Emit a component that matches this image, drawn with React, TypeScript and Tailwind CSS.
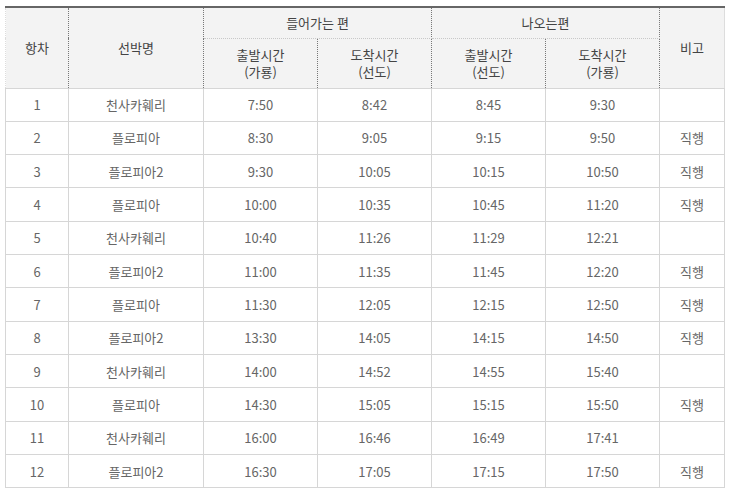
import React from "react";

type Row = [string, string, string, string, string, string, string];

const ROWS: Row[] = [
  ["1", "천사카훼리", "7:50", "8:42", "8:45", "9:30", ""],
  ["2", "플로피아", "8:30", "9:05", "9:15", "9:50", "직행"],
  ["3", "플로피아2", "9:30", "10:05", "10:15", "10:50", "직행"],
  ["4", "플로피아", "10:00", "10:35", "10:45", "11:20", "직행"],
  ["5", "천사카훼리", "10:40", "11:26", "11:29", "12:21", ""],
  ["6", "플로피아2", "11:00", "11:35", "11:45", "12:20", "직행"],
  ["7", "플로피아", "11:30", "12:05", "12:15", "12:50", "직행"],
  ["8", "플로피아2", "13:30", "14:05", "14:15", "14:50", "직행"],
  ["9", "천사카훼리", "14:00", "14:52", "14:55", "15:40", ""],
  ["10", "플로피아", "14:30", "15:05", "15:15", "15:50", "직행"],
  ["11", "천사카훼리", "16:00", "16:46", "16:49", "17:41", ""],
  ["12", "플로피아2", "16:30", "17:05", "17:15", "17:50", "직행"],
];

const FONT = "font-['Malgun_Gothic','Noto_Sans_CJK_KR',sans-serif]";

export default function App() {
  return (
    <div className={`w-[730px] h-[497px] bg-white pt-[6px] pl-[5px] ${FONT}`}>
      <table className="w-[719px] table-fixed border-collapse text-[13px] text-center">
        <colgroup>
          <col className="w-[63px]" />
          <col className="w-[135px]" />
          <col className="w-[114px]" />
          <col className="w-[114px]" />
          <col className="w-[114px]" />
          <col className="w-[114px]" />
          <col className="w-[65px]" />
        </colgroup>
        <thead className="bg-[#f3f3f3] text-[#444]">
          <tr className="border-t-2 border-t-[#666]">
            <th rowSpan={2} className="font-normal border-l border-l-[#ddd] border-r border-r-[#777] border-dotted border-b border-b-[#d6d6d6] border-b-solid">
              항차
            </th>
            <th rowSpan={2} className="font-normal border-r border-dotted border-r-[#777] border-b border-b-[#d6d6d6] border-b-solid">
              선박명
            </th>
            <th colSpan={2} className="h-[31px] font-normal border-r border-dotted border-r-[#777] border-b border-b-[#c8c8c8]">
              들어가는 편
            </th>
            <th colSpan={2} className="font-normal border-r border-dotted border-r-[#777] border-b border-b-[#c8c8c8]">
              나오는편
            </th>
            <th rowSpan={2} className="font-normal border-r border-r-[#ddd] border-b border-b-[#d6d6d6] border-b-solid">
              비고
            </th>
          </tr>
          <tr>
            {[
              ["출발시간", "(가룡)"],
              ["도착시간", "(선도)"],
              ["출발시간", "(선도)"],
              ["도착시간", "(가룡)"],
            ].map(([a, b], i) => (
              <th
                key={i}
                className="h-[50px] font-normal leading-[17px] border-r border-dotted border-r-[#777] border-b border-b-[#d6d6d6] border-b-solid"
              >
                {a}
                <br />
                {b}
              </th>
            ))}
          </tr>
        </thead>
        <tbody className="text-[#666]">
          {ROWS.map((r) => (
            <tr key={r[0]} className="h-[33.33px]">
              {r.map((c, j) => (
                <td key={j} className="border border-[#d6d6d6] p-0">
                  {c}
                </td>
              ))}
            </tr>
          ))}
        </tbody>
      </table>
    </div>
  );
}
